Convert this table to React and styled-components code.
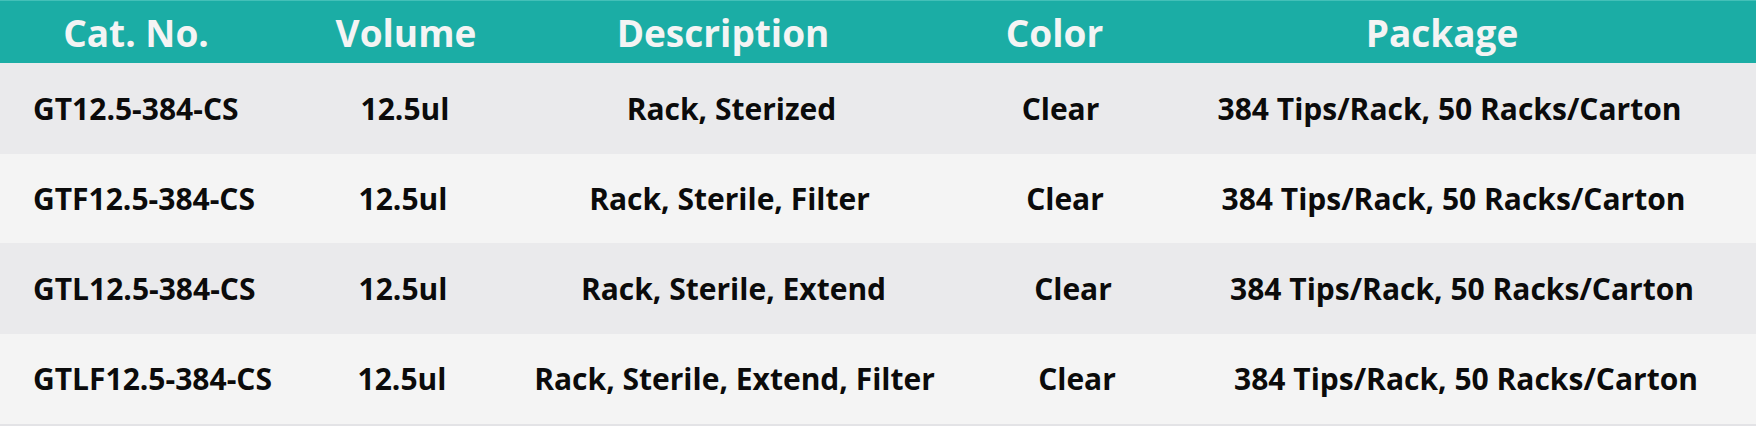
import React from 'react';
import styled, { createGlobalStyle } from 'styled-components';

const GlobalStyle = createGlobalStyle`
  html, body {
    margin: 0;
    padding: 0;
    background: #f4f4f4;
  }
  body {
    font-family: 'Open Sans', 'Noto Sans', 'Liberation Sans', sans-serif;
  }
`;

const columns = '272px 268px 366px 297px 478px 1fr';

const Table = styled.div`
  width: 1756px;
  border-bottom: 2px solid #e3e3e6;
`;

const HeadRow = styled.div`
  display: grid;
  grid-template-columns: ${columns};
  height: 62px;
  border-top: 1px solid #43c0b8;
  background: #1badA5;
  color: #f4f4f4;
  font-size: 37px;
  font-weight: 700;
`;

const BodyRow = styled.div`
  display: grid;
  grid-template-columns: ${columns};
  height: ${(p) => p.$h}px;
  background: ${(p) => (p.$odd ? '#eaeaec' : '#f4f4f4')};
  color: #0b0b0b;
  font-size: 30px;
  font-weight: 700;
`;

const Cell = styled.div`
  display: flex;
  align-items: center;
  justify-content: ${(p) => (p.$left ? 'flex-start' : 'center')};
  padding-left: ${(p) => (p.$left ? '33px' : '0')};
  min-width: 0;
  white-space: nowrap;
  line-height: 1;
`;

const Label = styled.span`
  margin-left: ${(p) => (p.$shift > 0 ? p.$shift * 2 : 0)}px;
  margin-right: ${(p) => (p.$shift < 0 ? -p.$shift * 2 : 0)}px;
`;

const heads = ['Cat. No.', 'Volume', 'Description', 'Color', 'Package'];

// shift = how far each value sits right of its column header (px)
const rows = [
  { cat: 'GT12.5-384-CS', desc: 'Rack, Sterized', h: 91, shift: [-1, 8.5, 6, 7.5] },
  { cat: 'GTF12.5-384-CS', desc: 'Rack, Sterile, Filter', h: 89, shift: [-3, 6.5, 10.5, 11.5] },
  { cat: 'GTL12.5-384-CS', desc: 'Rack, Sterile, Extend', h: 91, shift: [-3, 10.5, 18.5, 20] },
  { cat: 'GTLF12.5-384-CS', desc: 'Rack, Sterile, Extend, Filter', h: 90, shift: [-4, 11.5, 22.5, 24] },
];

export default function App() {
  return (
    <>
      <GlobalStyle />
      <Table>
        <HeadRow>
          {heads.map((h) => (
            <Cell key={h}>
              <Label $shift={0}>{h}</Label>
            </Cell>
          ))}
        </HeadRow>
        {rows.map((r, i) => (
          <BodyRow key={r.cat} $h={r.h} $odd={i % 2 === 0}>
            <Cell $left>
              <Label $shift={0}>{r.cat}</Label>
            </Cell>
            <Cell>
              <Label $shift={r.shift[0]}>12.5ul</Label>
            </Cell>
            <Cell>
              <Label $shift={r.shift[1]}>{r.desc}</Label>
            </Cell>
            <Cell>
              <Label $shift={r.shift[2]}>Clear</Label>
            </Cell>
            <Cell>
              <Label $shift={r.shift[3]}>384 Tips/Rack, 50 Racks/Carton</Label>
            </Cell>
          </BodyRow>
        ))}
      </Table>
    </>
  );
}
